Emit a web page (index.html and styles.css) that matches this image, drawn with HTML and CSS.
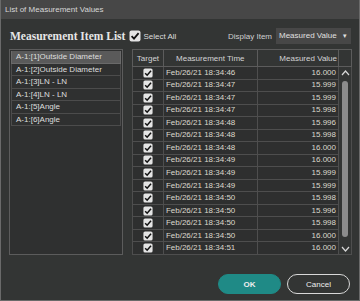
FILE: index.html
```html
<!DOCTYPE html>
<html lang="en">
<head>
  <meta charset="UTF-8">
  <title>List of Measurement Values</title>
  <link rel="stylesheet" href="styles.css">
</head>
<body>
  <div class="window">
    <div class="titlebar">List of Measurement Values</div>

    <div class="toolbar">
      <h1>Measurement Item List</h1>
      <label class="select-all">
        <svg class="check big" viewBox="0 0 12 12"><rect x="0.5" y="0.5" width="11" height="11" rx="2" fill="#e4e4e4"/><path d="M2.6 6.2 L5 8.6 L9.6 3.2" fill="none" stroke="#111" stroke-width="1.8"/></svg>
        Select All
      </label>
      <div class="spacer"></div>
      <span class="display-label">Display Item</span>
      <div class="dropdown">Measured Value <span class="caret">&#9662;</span></div>
    </div>

    <div class="main">
      <ul class="item-list">
        <li class="selected">A-1:[1]Outside Diameter</li>
        <li>A-1:[2]Outside Diameter</li>
        <li>A-1:[3]LN - LN</li>
        <li>A-1:[4]LN - LN</li>
        <li>A-1:[5]Angle</li>
        <li>A-1:[6]Angle</li>
      </ul>

      <table class="values">
        <thead>
          <tr>
            <th class="c-target">Target</th>
            <th class="c-time">Measurement Time</th>
            <th class="c-value">Measured Value</th>
            <th class="c-scroll"></th>
          </tr>
        </thead>
        <tbody id="rows"></tbody>
      </table>
    </div>

    <div class="footer">
      <button class="btn ok">OK</button>
      <button class="btn cancel">Cancel</button>
    </div>
  </div>

  <script>
    var data = [
      ["46", "16.000"], ["47", "15.999"], ["47", "15.999"], ["47", "15.998"],
      ["48", "15.996"], ["48", "15.998"], ["48", "16.000"], ["49", "16.000"],
      ["49", "15.999"], ["49", "15.999"], ["50", "15.998"], ["50", "15.996"],
      ["50", "15.998"], ["50", "16.000"], ["51", "16.000"]
    ];
    var check = '<svg class="check" viewBox="0 0 12 12"><rect x="0.5" y="0.5" width="11" height="11" rx="2" fill="#e4e4e4"/><path d="M2.6 6.2 L5 8.6 L9.6 3.2" fill="none" stroke="#111" stroke-width="1.8"/></svg>';
    var up = '<svg class="arrow" viewBox="0 0 9 6"><path d="M1 5 L4.5 1 L8 5" fill="none" stroke="#d8d8d8" stroke-width="1.2"/></svg>';
    var down = '<svg class="arrow" viewBox="0 0 9 6"><path d="M1 1 L4.5 5 L8 1" fill="none" stroke="#d8d8d8" stroke-width="1.2"/></svg>';
    var html = "";
    data.forEach(function (d, i) {
      html += "<tr><td class='c-target'>" + check + "</td>" +
        "<td class='c-time'>Feb/26/21 18:34:" + d[0] + "</td>" +
        "<td class='c-value'>" + d[1] + "</td>";
      if (i === 0) {
        html += "<td class='c-scroll' rowspan='" + data.length + "'>" +
          "<div class='scrollbar'>" + up + "<div class='thumb'></div>" + down + "</div></td>";
      }
      html += "</tr>";
    });
    document.getElementById("rows").innerHTML = html;
  </script>
</body>
</html>
```

FILE: styles.css
```css
* {
  box-sizing: border-box;
}

body {
  margin: 0;
  font-family: "Liberation Sans", Arial, sans-serif;
  background: #333534;
  color: #dcd8cc;
}

.window {
  width: 360px;
  height: 301px;
  background: #333534;
  border-left: 1px solid #6a6a6a;
  border-right: 1px solid #6a6a6a;
  border-bottom: 1px solid #6a6a6a;
  display: flex;
  flex-direction: column;
}

.titlebar {
  height: 19px;
  line-height: 19px;
  padding-left: 4px;
  background: #474747;
  color: #d6d6d6;
  font-size: 8px;
}

.toolbar {
  display: flex;
  align-items: center;
  height: 20px;
  margin-top: 7px;
  padding: 0 8px 0 9px;
}

h1 {
  margin: 0;
  font-family: "Liberation Serif", "DejaVu Serif", serif;
  font-size: 11.5px;
  font-weight: bold;
  color: #e6e6e6;
}

.select-all {
  display: flex;
  align-items: center;
  gap: 2px;
  margin-left: 4px;
  font-size: 8px;
  color: #dcdcdc;
}

.check {
  width: 10px;
  height: 10px;
  display: block;
}

.check.big {
  width: 12px;
  height: 12px;
}

.spacer {
  flex: 1;
}

.display-label {
  font-size: 8px;
  color: #cfcfcf;
  margin-right: 4px;
}

.dropdown {
  width: 75px;
  height: 16px;
  line-height: 16px;
  padding-left: 3px;
  background: #474747;
  font-size: 8px;
  color: #e0e0e0;
  position: relative;
}

.caret {
  position: absolute;
  right: 4px;
  top: 0;
  font-size: 7px;
}

.main {
  display: flex;
  gap: 9px;
  margin-top: 3px;
  padding: 0 7px 0 8px;
  height: 206px;
}

.item-list {
  list-style: none;
  margin: 0;
  padding: 1px;
  width: 114px;
  height: 206px;
  border: 1px solid #5c5c5c;
  background: #2f3030;
}

.item-list li {
  height: 12.5px;
  line-height: 12px;
  padding-left: 4px;
  font-size: 8px;
  border: 1px solid #4c4c4c;
  border-top: none;
  color: #dedede;
}

.item-list li.selected {
  background: #5a5a5a;
  border-color: #6a6a6a;
}

.values {
  flex: 1;
  border-collapse: collapse;
  border: 1px solid #5c5c5c;
  font-size: 8px;
  table-layout: fixed;
  height: 206px;
}

.values th {
  height: 17px;
  font-weight: normal;
  color: #d4d4d4;
  border: 1px solid #5c5c5c;
  background: #333534;
}

.values td {
  height: 12.5px;
  padding: 0 2px;
  border: 1px solid #4e4e4e;
  background: #2e2f2f;
  line-height: 10px;
  white-space: nowrap;
}

.c-target {
  width: 31px;
}

.values td.c-target .check {
  margin: 0 auto;
}

.c-time {
  width: 94px;
}

.c-value {
  width: 82px;
  text-align: right;
}

.values .c-scroll {
  width: 13px;
  padding: 0;
  vertical-align: top;
  background: #333534;
}

.scrollbar {
  display: flex;
  flex-direction: column;
  align-items: center;
  height: 187px;
  padding: 3px 0 2px;
}

.arrow {
  width: 9px;
  height: 6px;
  display: block;
}

.thumb {
  flex: 1;
  width: 6px;
  margin: 5px 0 9px;
  border-radius: 3px;
  background: #8c8c8c;
}

.footer {
  display: flex;
  justify-content: flex-end;
  gap: 6px;
  margin-top: 19px;
  padding-right: 9px;
}

.btn {
  width: 63px;
  height: 20px;
  border-radius: 10px;
  font-family: "Liberation Sans", Arial, sans-serif;
  font-size: 8px;
  color: #eeeeee;
}

.btn.ok {
  background: #1f8a86;
  border: 1px solid #1f8a86;
  font-weight: bold;
}

.btn.cancel {
  background: transparent;
  border: 1px solid #d8d8d8;
}
```
